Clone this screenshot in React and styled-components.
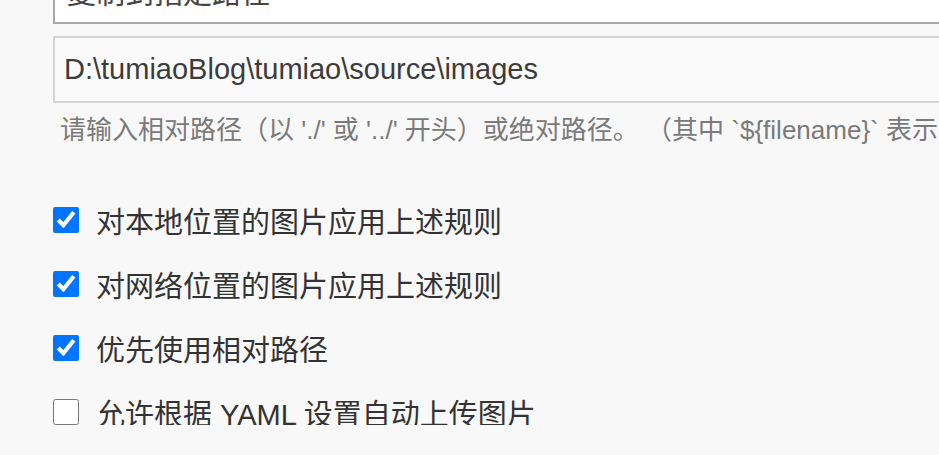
import React, { useState } from "react"
import styled, { createGlobalStyle } from "styled-components"

const GlobalStyle = createGlobalStyle`
  html, body {
    margin: 0;
    padding: 0;
    background: #f8f8f8;
    overflow: hidden;
  }
  body {
    font-family: "Liberation Sans", "Noto Sans CJK SC", sans-serif;
    color: #333;
  }
`

const Panel = styled.div`
  padding-left: 53px;
  margin-top: -43px;
  width: 1200px;
`

const Select = styled.div`
  box-sizing: border-box;
  height: 67px;
  background: #fff;
  border: 2px solid #a8a8a8;
  padding: 0 12px;
  display: flex;
  align-items: center;
  font-size: 29px;
  color: #444;
`

const PathInput = styled.input`
  display: block;
  box-sizing: border-box;
  width: 100%;
  height: 67px;
  margin-top: 12px;
  padding: 0 9px;
  background: #fafafa;
  border: 2px solid #d4d4d4;
  outline: none;
  font-family: "Liberation Sans", "Noto Sans CJK SC", sans-serif;
  font-size: 29px;
  color: #3c3c3c;
`

const Hint = styled.p`
  margin: 12px 0 0 7px;
  font-size: 26px;
  line-height: 30px;
  color: #7a7a7a;
  white-space: nowrap;
`

const Options = styled.div`
  display: flex;
  flex-direction: column;
  gap: 37px;
  margin-top: 61px;
`

const Option = styled.label`
  display: flex;
  align-items: center;
  gap: 17px;
  height: 27px;
  font-size: 29px;
  color: #333;
  cursor: pointer;
`

const Box = styled.input`
  width: 26px;
  height: 26px;
  margin: 0;
  accent-color: #0075ff;
`

const options = [
  { id: "local", label: "对本地位置的图片应用上述规则", checked: true },
  { id: "network", label: "对网络位置的图片应用上述规则", checked: true },
  { id: "relative", label: "优先使用相对路径", checked: true },
  { id: "yaml", label: "允许根据 YAML 设置自动上传图片", checked: false },
]

const App = () => {
  const [values, setValues] = useState(
    Object.fromEntries(options.map(o => [o.id, o.checked]))
  )

  return (
    <Panel>
      <GlobalStyle />
      <Select>复制到指定路径</Select>
      <PathInput defaultValue="D:\tumiaoBlog\tumiao\source\images" />
      <Hint>
        请输入相对路径（以 './' 或 '../' 开头）或绝对路径。 （其中 `${"{filename}"}` 表示当前文件名）
      </Hint>
      <Options>
        {options.map(o => (
          <Option key={o.id}>
            <Box
              type="checkbox"
              checked={values[o.id]}
              onChange={() => setValues({ ...values, [o.id]: !values[o.id] })}
            />
            {o.label}
          </Option>
        ))}
      </Options>
    </Panel>
  )
}

export default App
